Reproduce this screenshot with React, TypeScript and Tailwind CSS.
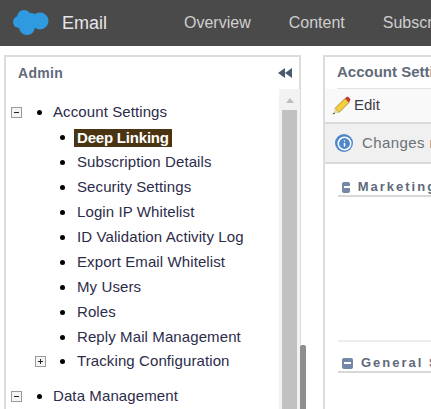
import { Info } from "lucide-react";

const NAV_ITEMS = ["Overview", "Content", "Subscribers"];

const CHILDREN = [
  "Subscription Details",
  "Security Settings",
  "Login IP Whitelist",
  "ID Validation Activity Log",
  "Export Email Whitelist",
  "My Users",
  "Roles",
  "Reply Mail Management",
];

function Toggle({ open }: { open: boolean }) {
  return (
    <span className="relative block w-[11px] h-[11px] shrink-0 border border-[#9a9a9a] bg-[#f4f4f4]">
      <span className="absolute left-[2px] top-[4px] w-[5px] h-px bg-[#222]" />
      {!open && <span className="absolute left-[4px] top-[2px] w-px h-[5px] bg-[#222]" />}
    </span>
  );
}

function Bullet() {
  return <span className="block w-[5px] h-[5px] shrink-0 rounded-full bg-black" />;
}

function ChildRow({ label }: { label: string }) {
  return (
    <div className="flex items-center h-[25px] pl-[54px]">
      <Bullet />
      <span className="ml-[12px] text-[15px] tracking-[0.1px] text-[#2c2c4a]">{label}</span>
    </div>
  );
}

function SectionHead({ label }: { label: string }) {
  return (
    <div className="flex items-center h-[18px] border-b-2 border-[#d8d8d8] pl-[4px] gap-[8px]">
      <span className="relative block w-[11px] h-[11px] rounded-[2px] bg-[#7288a6]">
        <span className="absolute left-[2px] top-[4px] w-[7px] h-[2px] bg-white" />
      </span>
      <span className="text-[13px] font-bold tracking-[2px] text-[#5f6a7a]">{label}</span>
    </div>
  );
}

function Logo() {
  return (
    <svg width="37" height="26" viewBox="0 0 37 26" className="shrink-0" fill="#2f9ae0">
      <circle cx="11" cy="7" r="7" />
      <circle cx="27" cy="11" r="8.500" />
      <circle cx="14" cy="17" r="8" />
      <circle cx="6" cy="12" r="6" />
      <circle cx="18" cy="11" r="8" />
    </svg>
  );
}

function Pencil() {
  return (
    <svg width="20" height="20" viewBox="0 0 20 20" className="shrink-0">
      <path fill="#f4cf3a" stroke="#8a6d1d" strokeWidth="0.7" d="M4 12.500 14 2.500l4 4L8 16.500z" />
      <path fill="#c93a35" d="M14 2.500l1.500-1.500c.6-.5 1.300-.5 1.900 0l1.700 1.700c.5.600.5 1.300 0 1.900L18 6.500z" />
      <path fill="#e8d3a8" d="M4 12.500 8 16.500 2.500 18z" />
      <path fill="#333" d="M2.900 16.500 4 17.600 1.500 18.500z" />
    </svg>
  );
}

export default function App() {
  return (
    <div className="w-[431px] h-[409px] overflow-hidden bg-white font-['Liberation_Sans',Arial,sans-serif]">
      <header className="flex items-center h-[46px] bg-[#4a4a4a] pl-[13px] whitespace-nowrap">
        <Logo />
        <span className="ml-[12px] text-[18px] text-[#e6e6e6]">Email</span>
        <nav className="flex ml-[77px] gap-[38px]">
          {NAV_ITEMS.map(item => (
            <span key={item} className="text-[16px] text-[#cfcfcf]">{item}</span>
          ))}
        </nav>
      </header>

      <div className="flex items-start mt-[9px] pl-[4px] gap-[22px]">
        {/* Admin tree */}
        <aside className="relative w-[297px] h-[400px] shrink-0 border-2 border-[#dcdcdc] border-b-0">
          <div className="flex items-center justify-between h-[32px] pl-[12px] pr-[7px]">
            <span className="text-[14px] tracking-[0.3px] font-bold text-[#5f6a7a]">Admin</span>
            <span className="flex">
              <span className="w-0 h-0 border-y-[5px] border-y-transparent border-r-[7px] border-r-[#4b5a6e]" />
              <span className="w-0 h-0 border-y-[5px] border-y-transparent border-r-[7px] border-r-[#4b5a6e]" />
            </span>
          </div>

          <div className="pt-[11px]">
            <div className="flex items-center h-[25px] pl-[5px]">
              <Toggle open />
              <span className="ml-[15px]"><Bullet /></span>
              <span className="ml-[11px] text-[15px] tracking-[0.1px] text-[#2c2c4a]">Account Settings</span>
            </div>
            <div className="flex items-center h-[25px] pl-[54px]">
              <Bullet />
              <span className="ml-[9px] px-[3px] h-[18px] leading-[18px] bg-[#4a3412] text-[15px] tracking-[-0.2px] font-bold text-white">
                Deep Linking
              </span>
            </div>
            {CHILDREN.map(label => (
              <ChildRow key={label} label={label} />
            ))}
            <div className="flex items-center h-[23px] pl-[29px]">
              <Toggle open={false} />
              <span className="ml-[14px]"><Bullet /></span>
              <span className="ml-[12px] text-[15px] tracking-[0.1px] text-[#2c2c4a]">Tracking Configuration</span>
            </div>
            <div className="flex items-center h-[25px] mt-[11px] pl-[5px]">
              <Toggle open />
              <span className="ml-[15px]"><Bullet /></span>
              <span className="ml-[11px] text-[15px] tracking-[0.1px] text-[#2c2c4a]">Data Management</span>
            </div>
          </div>

          {/* scrollbar */}
          <div className="absolute left-[273px] top-[32px] bottom-0 w-[21px] bg-[#f2f2f2] px-[3px]">
            <div className="flex justify-center pt-[9px] h-[21px]">
              <span className="w-0 h-0 border-x-[4px] border-x-transparent border-b-[5px] border-b-[#bdbdbd]" />
            </div>
            <div className="h-[400px] bg-[#c1c1c1]" />
          </div>
          <div className="absolute left-[294px] top-[288px] bottom-0 w-[6px] bg-[#8e8e8e] rounded-t-[2px]" />
        </aside>

        {/* Account settings panel */}
        <main className="w-[200px] h-[400px] shrink-0 border-2 border-[#dcdcdc] border-r-0 border-b-0 overflow-hidden whitespace-nowrap">
          <div className="mx-[12px] h-[32px] flex items-center border-b border-[#e2e2e2]">
            <span className="text-[15px] font-bold text-[#5f6a7a]">Account Settings</span>
          </div>
          <div className="flex items-center h-[33px] pl-[6px] bg-[#f9f9f9]">
            <Pencil />
            <span className="ml-[3px] text-[15px] text-[#3c3c4a]">Edit</span>
          </div>
          <div className="flex items-center h-[42px] pl-[10px] bg-[#f0f0f0] border-y-2 border-[#d9d9d9]">
            <span className="flex items-center justify-center w-[18px] h-[18px] rounded-full bg-[#4f87c9]">
              <Info size={15} className="text-white" strokeWidth={2.5} />
            </span>
            <span className="ml-[9px] text-[15px] tracking-[0.4px] text-[#6a7078]">Changes made here</span>
          </div>
          <div className="pt-[15px] mx-[13px]">
            <SectionHead label="Marketing Settings" />
          </div>
          <div className="mt-[143px] mx-[13px] border-t-2 border-[#ececec] pt-[13px]">
            <SectionHead label="General Settings" />
          </div>
        </main>
      </div>
    </div>
  );
}
